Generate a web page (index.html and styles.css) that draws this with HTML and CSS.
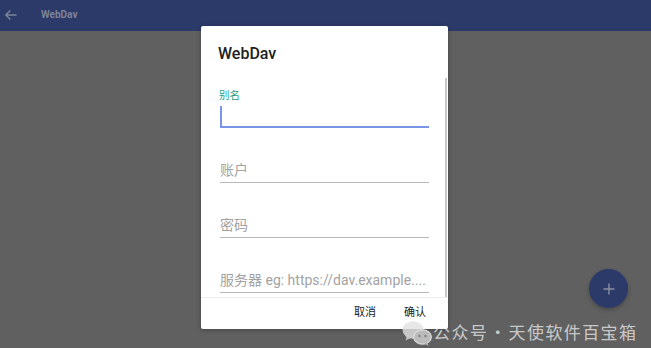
FILE: index.html
```html
<!DOCTYPE html>
<html lang="zh">
<head>
<meta charset="utf-8">
<title>WebDav</title>
<link rel="stylesheet" href="styles.css">
</head>
<body>
<div class="screen">
  <header class="appbar">
    <svg class="back" width="14" height="14" viewBox="0 0 14 14"><path d="M12.5 7H1.8M6.3 2.5L1.8 7l4.5 4.5" fill="none" stroke="#7c8497" stroke-width="1.4"/></svg>
    <span class="appbar-title">WebDav</span>
  </header>
  <main class="content"></main>

  <div class="dialog">
    <div class="dlg-title">WebDav</div>
    <div class="dlg-body">
      <div class="field focused">
        <div class="float-label">别名</div>
        <div class="input"><span class="cursor"></span></div>
      </div>
      <div class="field">
        <div class="input hint">账户</div>
      </div>
      <div class="field">
        <div class="input hint">密码</div>
      </div>
      <div class="field">
        <div class="input hint">服务器 eg: https://dav.example....</div>
      </div>
      <div class="scroll-thumb"></div>
    </div>
    <div class="dlg-actions">
      <span class="btn">取消</span>
      <span class="btn">确认</span>
    </div>
  </div>

  <button class="fab"><svg width="14" height="14" viewBox="0 0 14 14"><path d="M7 1.5v11M1.5 7h11" stroke="#8b90a0" stroke-width="1.4"/></svg></button>

  <div class="watermark">
    <svg class="wx" width="30" height="26" viewBox="0 0 30 26">
      <ellipse cx="11" cy="10" rx="10.5" ry="8.8" fill="#e2e2e2"/>
      <path d="M5 16l-1.5 4.5 5-2.5z" fill="#e2e2e2"/>
      <ellipse cx="20.5" cy="17" rx="8.8" ry="7.2" fill="#d2d2d2" stroke="#ffffff" stroke-width="1.2"/>
      <path d="M25 22.5l1.8 3.2-4.4-2z" fill="#d2d2d2"/>
      <circle cx="17.5" cy="16" r="1.2" fill="#8a8a8a"/>
      <circle cx="23.5" cy="16" r="1.2" fill="#8a8a8a"/>
    </svg>
    <span class="wm-text">公众号<span class="dot">·</span>天使软件百宝箱</span>
  </div>
</div>
</body>
</html>
```
FILE: styles.css
```css
* { box-sizing: border-box; }
html, body { margin: 0; padding: 0; }
body {
  width: 651px;
  height: 348px;
  overflow: hidden;
  background: #606060;
  font-family: Roboto, "Noto Sans CJK SC", sans-serif;
}
.screen {
  position: relative;
  width: 651px;
  height: 348px;
  display: flex;
  flex-direction: column;
}
.appbar {
  height: 31px;
  background: #2c3a6a;
  display: flex;
  align-items: center;
  padding-left: 4px;
  padding-bottom: 1px;
}
.back { display: block; margin-right: 23px; }
.appbar-title {
  color: #7d8397;
  font-size: 10px;
  font-weight: 700;
  line-height: 12px;
}
.content { flex: 1; }

.dialog {
  position: absolute;
  left: 201px;
  top: 26px;
  width: 247px;
  height: 303px;
  background: #ffffff;
  border-radius: 2px;
  box-shadow: 0 1px 4px rgba(0,0,0,0.3);
  display: flex;
  flex-direction: column;
}
.dlg-title {
  height: 52px;
  padding: 18px 17px 0;
  font-size: 16px;
  line-height: 20px;
  font-weight: 500;
  color: #212121;
}
.dlg-body {
  position: relative;
  height: 219px;
  overflow: hidden;
  padding: 11px 19px 0;
}
.float-label {
  font-size: 10.5px;
  line-height: 14px;
  color: #2a9e7c;
  margin-left: -1px;
}
.input {
  font-size: 14px;
  line-height: 20px;
  height: 22px;
  padding-bottom: 2px;
  border-bottom: 1px solid #b9b9b9;
  white-space: nowrap;
  overflow: hidden;
}
.field + .field { margin-top: 32px; }
.field + .field .input { height: 23px; }
.focused .input {
  height: 25px;
  padding-top: 3px;
  padding-bottom: 0;
  border-bottom: 2px solid #7a95e8;
}
.cursor {
  display: block;
  width: 2px;
  height: 20px;
  background: #7a95e8;
}
.hint { color: #a3a3a3; }
.scroll-thumb {
  position: absolute;
  right: 1px;
  top: 0;
  width: 2.5px;
  height: 219px;
  background: #c6c6c6;
}
.dlg-actions {
  height: 32px;
  border-top: 1px solid #eeeeee;
  display: flex;
  justify-content: flex-end;
  gap: 28px;
  padding: 8px 22px 0 0;
}
.btn {
  font-size: 11px;
  line-height: 14px;
  color: #222222;
}

.fab {
  position: absolute;
  left: 589px;
  top: 269px;
  width: 39px;
  height: 39px;
  border: none;
  border-radius: 50%;
  background: #2c3a6a;
  box-shadow: 0 2px 4px rgba(0,0,0,0.25);
  display: flex;
  align-items: center;
  justify-content: center;
  padding: 0;
}
.fab svg { display: block; }

.watermark {
  position: absolute;
  left: 402px;
  top: 318px;
  display: flex;
  align-items: center;
  gap: 1px;
}
.wx { display: block; opacity: 0.8; margin-top: 2px; }
.wm-text {
  font-size: 17px;
  line-height: 24px;
  color: rgba(255,255,255,0.68);
  letter-spacing: 1.4px;
  font-family: "Noto Sans CJK SC", sans-serif;
  white-space: nowrap;
}
.dot { margin: 0 1px; }
```
